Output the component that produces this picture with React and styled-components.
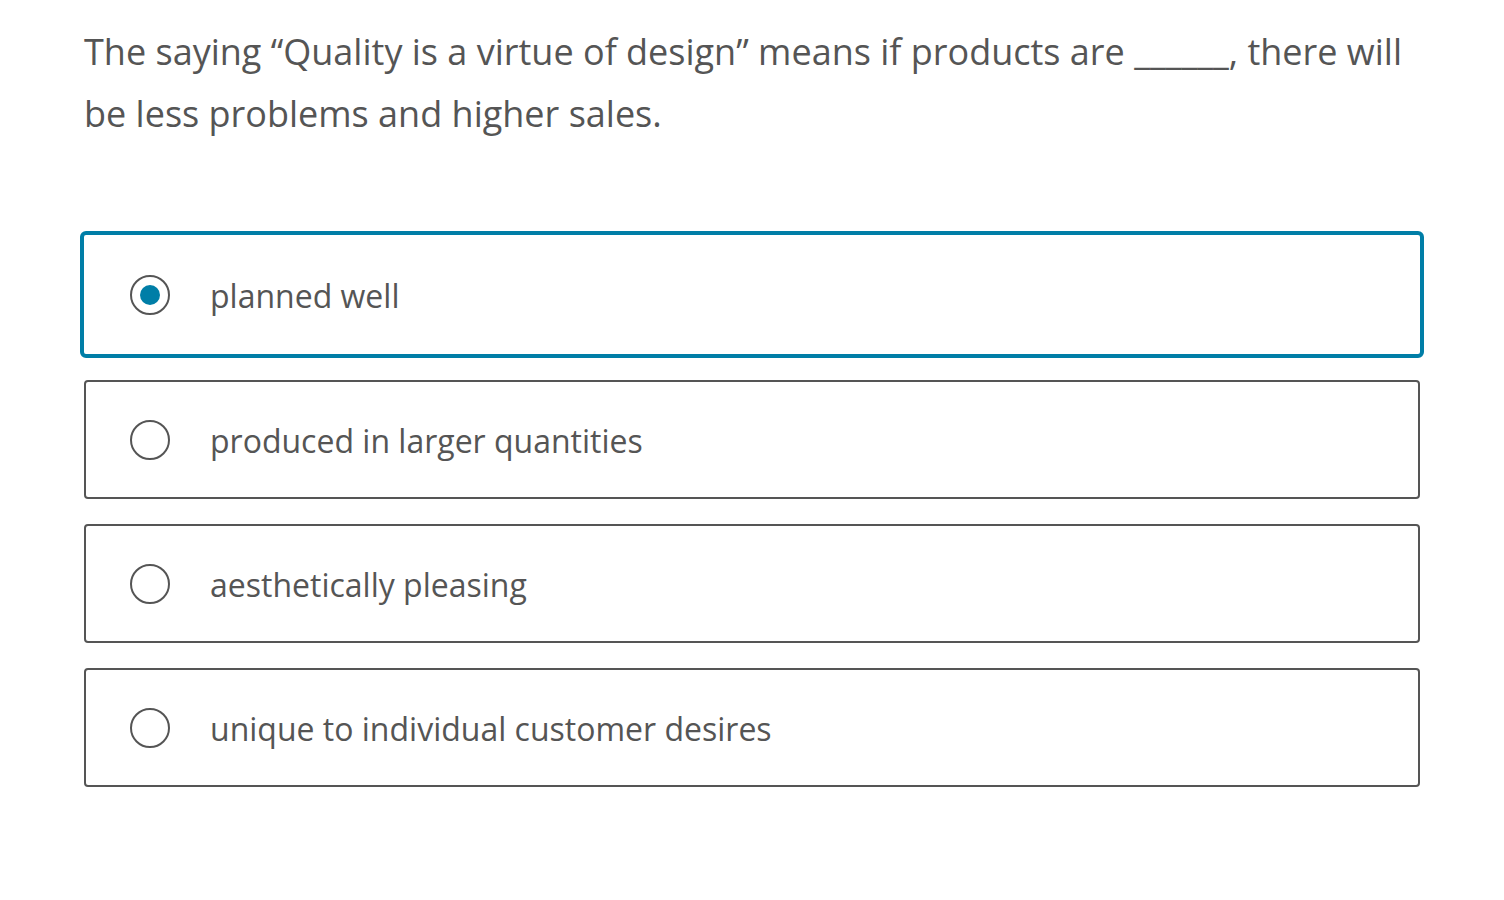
import React from "react";
import styled, { createGlobalStyle } from "styled-components";

const Global = createGlobalStyle`
  html, body { margin: 0; padding: 0; background: #fff; }
  body { font-family: "Open Sans", "Noto Sans", sans-serif; color: #555; }
`;

const Page = styled.div`
  padding: 21px 84px 0 84px;
  width: 1336px;
`;

const Question = styled.p`
  margin: 0;
  font-size: 36px;
  line-height: 62px;
  color: #555;
`;

const Options = styled.div`
  margin-top: 90px;
  display: flex;
  flex-direction: column;
  gap: 25px;
`;

const Option = styled.label`
  box-sizing: border-box;
  display: flex;
  align-items: center;
  height: ${(p) => (p.$selected ? 127 : 119)}px;
  margin: ${(p) => (p.$selected ? "-4px -4px -3px" : "0")};
  border: ${(p) => (p.$selected ? "4px solid #007ea7" : "2px solid #555")};
  border-radius: ${(p) => (p.$selected ? 6 : 4)}px;
  padding-left: ${(p) => (p.$selected ? 46 : 44)}px;
  gap: 40px;
  cursor: pointer;
`;

const Radio = styled.span`
  box-sizing: border-box;
  width: 40px;
  height: 40px;
  border-radius: 50%;
  border: 2px solid #555;
  display: flex;
  align-items: center;
  justify-content: center;
  flex-shrink: 0;
  &::after {
    content: "";
    width: 20px;
    height: 20px;
    border-radius: 50%;
    background: #007ea7;
    display: ${(p) => (p.$checked ? "block" : "none")};
  }
`;

const OptionText = styled.span`
  font-size: 32px;
  color: #555;
  line-height: 1;
  padding-top: 3px;
`;

const options = [
  "planned well",
  "produced in larger quantities",
  "aesthetically pleasing",
  "unique to individual customer desires",
];

export default function App() {
  return (
    <>
      <Global />
      <Page>
        <Question>
          The saying “Quality is a virtue of design” means if products are ______, there will be less problems and higher sales.
        </Question>
        <Options>
          {options.map((o, i) => (
            <Option key={o} $selected={i === 0}>
              <Radio $checked={i === 0} />
              <OptionText>{o}</OptionText>
            </Option>
          ))}
        </Options>
      </Page>
    </>
  );
}
